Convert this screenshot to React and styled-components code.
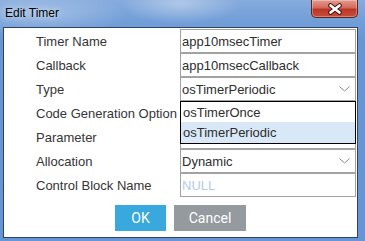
import React from "react";
import styled, { createGlobalStyle } from "styled-components";

const Global = createGlobalStyle`
  html, body { margin: 0; padding: 0; background: #fff; }
  body { width: 365px; height: 241px; overflow: hidden; }
`;

const Window = styled.div`
  box-sizing: border-box;
  width: 365px;
  height: 241px;
  display: flex;
  flex-direction: column;
  padding: 0 7px 3px 3px;
  background:
    radial-gradient(ellipse 60px 20px at 180px 4px, rgba(255,255,255,0.35), rgba(255,255,255,0) 100%),
    radial-gradient(ellipse 90px 22px at 40px 14px, rgba(255,255,255,0.3), rgba(255,255,255,0) 100%),
    linear-gradient(180deg, #86abdc 0px, #739fd8 20px, #6896d4 40px, #6794d4 100%);
`;

const TitleBar = styled.div`
  height: 27px;
  display: flex;
  justify-content: space-between;
  align-items: flex-start;
  padding-left: 2px;
`;

const Title = styled.div`
  font-family: "Liberation Sans", Arial, sans-serif;
  font-size: 12px;
  color: #000;
  line-height: 14px;
  margin-top: 6px;
  text-shadow: 0 0 6px rgba(255,255,255,0.8);
`;

const CloseButton = styled.div`
  box-sizing: border-box;
  width: 47px;
  height: 18px;
  border: 1px solid #5e2520;
  border-top: none;
  border-radius: 0 0 5px 5px;
  background: linear-gradient(180deg, #e39c90 0%, #d26a5c 45%, #bb3626 55%, #c84e3a 100%);
  display: flex;
  align-items: center;
  justify-content: center;
  box-shadow: inset 0 0 0 1px rgba(255,255,255,0.3);
`;

const Client = styled.div`
  flex: 1;
  border: 1px solid #2d4360;
  background: #fff;
  display: flex;
  flex-direction: column;
  padding-top: 1px;
`;

const Form = styled.div`
  display: grid;
  grid-template-columns: 176px 176px;
  grid-auto-rows: 24px;
  font-family: "Liberation Sans", Arial, sans-serif;
  font-size: 13px;
  color: #353535;
`;

const Label = styled.div`
  padding-left: 32px;
  display: flex;
  align-items: center;
`;

const FieldCell = styled.div`
  position: relative;
`;

const Field = styled.div`
  box-sizing: border-box;
  height: 24px;
  border: 1px solid #a2a2a2;
  display: flex;
  align-items: center;
  justify-content: space-between;
  padding: 0 5px 0 1px;
  color: ${(p) => (p.$placeholder ? "#b3cbe9" : "#2e2e2e")};
  background: #fff;
`;

const DropList = styled.div`
  position: absolute;
  top: 24px;
  left: 0;
  width: 176px;
  box-sizing: border-box;
  border: 1px solid #000;
  background: #fff;
  z-index: 2;
  display: flex;
  flex-direction: column;
`;

const Option = styled.div`
  height: ${(p) => (p.$selected ? 21 : 20)}px;
  display: flex;
  align-items: center;
  padding-left: 2px;
  color: #2e2e2e;
  background: ${(p) => (p.$selected ? "#d9e8f6" : "#fff")};
`;

const Buttons = styled.div`
  display: flex;
  justify-content: center;
  gap: 8px;
  margin-top: 8px;
`;

const Button = styled.div`
  width: ${(p) => p.$w}px;
  height: 26px;
  display: flex;
  align-items: center;
  justify-content: center;
  font-family: Roboto, "Liberation Sans", Arial, sans-serif;
  font-size: 14px;
  color: #fff;
  background: ${(p) => (p.$primary ? "#38a8dd" : "#959a9e")};
`;

const Chevron = () => (
  <svg width="11" height="6" viewBox="0 0 11 6">
    <path d="M0.5 0.5 L5.5 5 L10.5 0.5" fill="none" stroke="#8a8a8a" strokeWidth="1" />
  </svg>
);

const CloseGlyph = () => (
  <svg width="16" height="12" viewBox="0 0 16 12">
    <path d="M3.5 2.5 L12.5 9.5 M12.5 2.5 L3.5 9.5" stroke="#43160f" strokeWidth="4.6" strokeLinecap="round" />
    <path d="M3.5 2.5 L12.5 9.5 M12.5 2.5 L3.5 9.5" stroke="#fff" strokeWidth="2.6" strokeLinecap="round" />
  </svg>
);

const rows = [
  { label: "Timer Name", value: "app10msecTimer" },
  { label: "Callback", value: "app10msecCallback" },
  { label: "Type", value: "osTimerPeriodic", select: true, open: true },
  { label: "Code Generation Option", value: "" },
  { label: "Parameter", value: "" },
  { label: "Allocation", value: "Dynamic", select: true },
  { label: "Control Block Name", value: "NULL", placeholder: true },
];

export default function App() {
  return (
    <>
      <Global />
      <Window>
        <TitleBar>
          <Title>Edit Timer</Title>
          <CloseButton>
            <CloseGlyph />
          </CloseButton>
        </TitleBar>
        <Client>
          <Form>
            {rows.map((r) => (
              <React.Fragment key={r.label}>
                <Label>{r.label}</Label>
                <FieldCell>
                  <Field $placeholder={r.placeholder}>
                    <span>{r.value}</span>
                    {r.select && <Chevron />}
                  </Field>
                  {r.open && (
                    <DropList>
                      <Option>osTimerOnce</Option>
                      <Option $selected>osTimerPeriodic</Option>
                    </DropList>
                  )}
                </FieldCell>
              </React.Fragment>
            ))}
          </Form>
          <Buttons>
            <Button $primary $w={51}>OK</Button>
            <Button $w={72}>Cancel</Button>
          </Buttons>
        </Client>
      </Window>
    </>
  );
}
